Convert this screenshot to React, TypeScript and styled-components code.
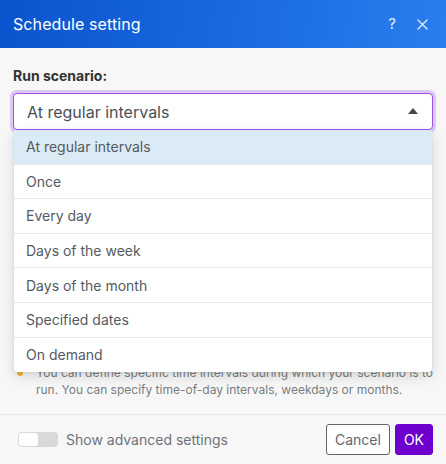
import React, {useState} from 'react';
import styled, {createGlobalStyle} from 'styled-components';

const GlobalStyle = createGlobalStyle`
	html, body {
		margin: 0;
		padding: 0;
		background: #f7f7f7;
	}

	body {
		font-family: Inter, "Noto Sans", "Liberation Sans", sans-serif;
		-webkit-font-smoothing: antialiased;
	}

	* {
		box-sizing: border-box;
	}
`;

const Dialog = styled.div`
	width: 446px;
	height: 464px;
	display: flex;
	flex-direction: column;
	background: #f7f7f7;
	overflow: hidden;
`;

const Header = styled.header`
	height: 48px;
	flex: none;
	display: flex;
	align-items: center;
	padding: 0 13px;
	background: linear-gradient(100deg, #0a53cd 0%, #1a68df 50%, #2a7eef 100%);
	color: #fff;
`;

const Title = styled.h1`
	flex: 1;
	margin: 0;
	font-size: 16px;
	font-weight: 400;
	letter-spacing: 0.1px;
`;

const HeaderActions = styled.div`
	display: flex;
	align-items: center;
	gap: 14px;
	margin-right: 3px;
`;

const IconButton = styled.button`
	width: 16px;
	height: 20px;
	padding: 0;
	border: 0;
	background: none;
	color: #e4ecfb;
	font-family: inherit;
	font-size: 15px;
	line-height: 20px;
	cursor: pointer;
	display: flex;
	align-items: center;
	justify-content: center;
`;

const Body = styled.div`
	flex: 1;
	padding: 19px 13px 0 13px;
`;

const Label = styled.div`
	font-size: 14px;
	font-weight: 700;
	color: #333;
	line-height: 18px;
	margin-bottom: 8px;
`;

const SelectWrap = styled.div`
	position: relative;
`;

const SelectBox = styled.div`
	height: 37px;
	display: flex;
	align-items: center;
	justify-content: space-between;
	padding: 0 14px 0 13px;
	background: #fff;
	border: 1px solid #9d4ff0;
	border-radius: 4px;
	box-shadow: 0 0 0 3px rgba(170, 110, 240, 0.35);
	font-size: 16px;
	color: #4a4f57;
	cursor: pointer;
`;

const Caret = styled.span`
	width: 0;
	height: 0;
	border-left: 5px solid transparent;
	border-right: 5px solid transparent;
	border-bottom: 6px solid #444a54;
	margin-top: -2px;
`;

const Menu = styled.ul`
	position: absolute;
	top: 100%;
	left: 1px;
	right: 1px;
	margin: 0;
	padding: 0;
	list-style: none;
	background: #fff;
	border-radius: 0 0 4px 4px;
	box-shadow: 0 4px 14px rgba(0, 0, 0, 0.14), 0 1px 3px rgba(0, 0, 0, 0.08);
	z-index: 5;
	overflow: hidden;
`;

const Option = styled.li<{$active?: boolean}>`
	height: 34.6px;
	display: flex;
	align-items: center;
	padding: 0 12px;
	font-size: 14px;
	color: #555a61;
	background: ${p => (p.$active ? '#daebf5' : '#fff')};
	border-bottom: 1px solid #e7e7e7;

	&:last-child {
		border-bottom: 0;
	}
`;

const Hint = styled.div`
	display: flex;
	gap: 8px;
	margin: 234px -8px 0 0;
	padding: 0 0 0 4px;
	font-size: 12px;
	line-height: 17px;
	color: #7a7d82;
`;

const Bulb = styled.span`
	flex: none;
	width: 6px;
	height: 6px;
	margin: 6px 5px 0 0;
	border-radius: 50%;
	background: #f4b52f;
`;

const Footer = styled.footer`
	height: 50px;
	flex: none;
	display: flex;
	align-items: center;
	padding: 0 13px 0 18px;
	border-top: 1px solid #e6e6e6;
`;

const Toggle = styled.label`
	flex: 1;
	display: flex;
	align-items: center;
	gap: 8px;
	font-size: 14px;
	color: #707378;
	cursor: pointer;
`;

const Track = styled.span`
	width: 40px;
	height: 15px;
	border-radius: 4px;
	background: #d9d9d9;
	padding: 1px;
	display: flex;
`;

const Knob = styled.span`
	width: 19px;
	height: 13px;
	border-radius: 3px;
	background: #fff;
`;

const Button = styled.button<{$primary?: boolean}>`
	height: 31px;
	padding: 0 8px;
	margin-left: 5px;
	border-radius: 3px;
	font-family: inherit;
	font-size: 14px;
	cursor: pointer;
	border: 1px solid ${p => (p.$primary ? '#6d00cc' : '#5f6670')};
	background: ${p => (p.$primary ? '#6d00cc' : '#fff')};
	color: ${p => (p.$primary ? '#fff' : '#5f6670')};
	min-width: ${p => (p.$primary ? '38px' : '63px')};
`;

const options = [
	'At regular intervals',
	'Once',
	'Every day',
	'Days of the week',
	'Days of the month',
	'Specified dates',
	'On demand',
];

const App = (): JSX.Element => {
	const [value] = useState(options[0]);

	return (
		<>
			<GlobalStyle/>
			<Dialog>
				<Header>
					<Title>Schedule setting</Title>
					<HeaderActions>
						<IconButton aria-label="Help">?</IconButton>
						<IconButton aria-label="Close">
							<svg width="11" height="11" viewBox="0 0 11 11">
								<path d="M1 1 L10 10 M10 1 L1 10" stroke="currentColor" strokeWidth="1.4" strokeLinecap="round"/>
							</svg>
						</IconButton>
					</HeaderActions>
				</Header>
				<Body>
					<Label>Run scenario:</Label>
					<SelectWrap>
						<SelectBox>
							{value}
							<Caret/>
						</SelectBox>
						<Menu>
							{options.map(option => (
								<Option key={option} $active={option === value}>{option}</Option>
							))}
						</Menu>
					</SelectWrap>
					<Hint>
						<Bulb/>
						<span>You can define specific time intervals during which your scenario is to run. You can specify time-of-day intervals, weekdays or months.</span>
					</Hint>
				</Body>
				<Footer>
					<Toggle>
						<Track><Knob/></Track>
						Show advanced settings
					</Toggle>
					<Button>Cancel</Button>
					<Button $primary>OK</Button>
				</Footer>
			</Dialog>
		</>
	);
};

export default App;
